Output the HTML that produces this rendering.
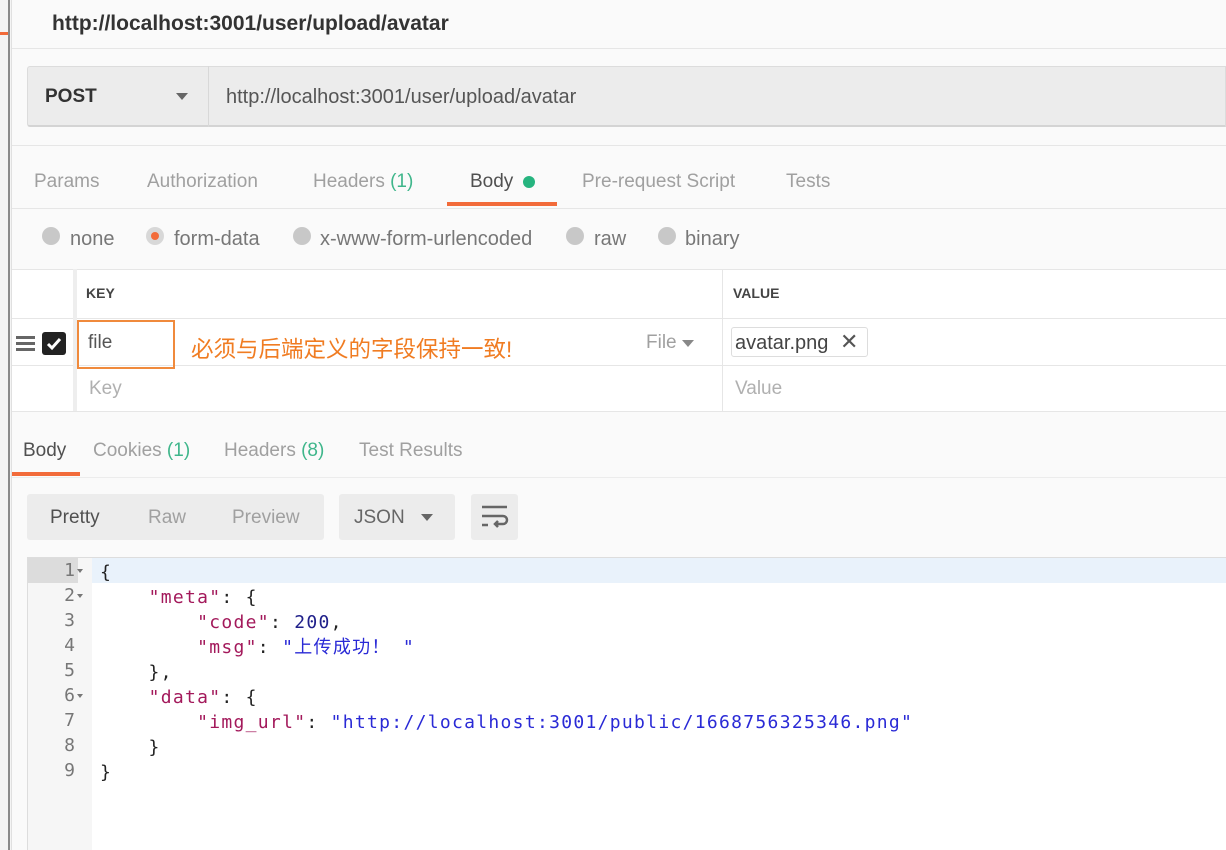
<!DOCTYPE html>
<html><head><meta charset="utf-8"><style>
*{margin:0;padding:0;box-sizing:border-box}
body{width:1226px;height:850px;overflow:hidden;background:#fafafa;font-family:"Liberation Sans","Noto Sans CJK SC",sans-serif;position:relative;color:#505050}
.a{position:absolute;white-space:nowrap}
.hl{position:absolute;height:1px;background:#e6e6e6}
.vl{position:absolute;width:1px;background:#e6e6e6}
.t{font-size:19px;color:#a0a0a0}
.g{color:#3fb68b}
.radio{position:absolute;width:18px;height:18px;border-radius:50%;background:#c8c8c8}
.code{font-family:"DejaVu Sans Mono","Liberation Mono","Noto Sans CJK SC",monospace;font-size:18px;letter-spacing:1.3px}
.ln{position:absolute;left:27px;width:48px;text-align:right;font-family:"DejaVu Sans Mono",monospace;font-size:18px;color:#777}
.k{color:#a3195b}.s{color:#2a2ad6}.n{color:#20208a}
</style></head><body>
<div class="a" style="left:0;top:0;width:11px;height:850px;background:#f4f4f4"></div>
<div class="a" style="left:8px;top:0;width:2px;height:850px;background:#8a8a8a"></div>
<div class="a" style="left:0;top:32px;width:8px;height:3px;background:#f26b3a"></div>
<div class="vl" style="left:11px;top:0;height:850px;background:#e0e0e0"></div>
<div class="a" style="left:12px;top:0;width:1214px;height:48px;background:#fafafa"></div>
<div class="a" style="left:52px;top:12px;font-size:21px;font-weight:bold;color:#333">http://localhost:3001/user/upload/avatar</div>
<div class="hl" style="left:12px;top:48px;width:1214px"></div>
<div class="a" style="left:27px;top:66px;width:1199px;height:61px;background:#ececec;border:1px solid #dcdcdc;border-radius:3px 0 0 3px;border-bottom:2px solid #d4d4d4"></div>
<div class="vl" style="left:208px;top:66px;height:61px;background:#d8d8d8"></div>
<div class="a" style="left:45px;top:86px;font-size:19px;font-weight:bold;color:#333">POST</div>
<div class="a" style="left:176px;top:93px;width:0;height:0;border-left:6px solid transparent;border-right:6px solid transparent;border-top:7px solid #666"></div>
<div class="a" style="left:226px;top:86px;font-size:20px;color:#555">http://localhost:3001/user/upload/avatar</div>
<div class="hl" style="left:12px;top:145px;width:1214px"></div>
<div class="a t" style="left:34px;top:171px">Params</div>
<div class="a t" style="left:147px;top:171px">Authorization</div>
<div class="a t" style="left:313px;top:171px">Headers <span class="g">(1)</span></div>
<div class="a t" style="left:470px;top:171px;color:#505050">Body</div>
<div class="a" style="left:523px;top:176px;width:12px;height:12px;border-radius:50%;background:#26b47f"></div>
<div class="a t" style="left:582px;top:171px">Pre-request Script</div>
<div class="a t" style="left:786px;top:171px">Tests</div>
<div class="a" style="left:447px;top:202px;width:110px;height:4px;background:#f26b3a"></div>
<div class="hl" style="left:12px;top:208px;width:1214px"></div>
<div class="radio" style="left:42px;top:227px"></div><div class="a t" style="left:70px;top:228px;color:#777;font-size:20px">none</div>
<div class="radio" style="left:146px;top:227px;background:#d8d8d8"></div><div class="a" style="left:151px;top:232px;width:8px;height:8px;border-radius:50%;background:#f26b3a"></div><div class="a t" style="left:174px;top:228px;color:#777;font-size:20px">form-data</div>
<div class="radio" style="left:293px;top:227px"></div><div class="a t" style="left:320px;top:228px;color:#777;font-size:20px">x-www-form-urlencoded</div>
<div class="radio" style="left:566px;top:227px"></div><div class="a t" style="left:594px;top:228px;color:#777;font-size:20px">raw</div>
<div class="radio" style="left:658px;top:227px"></div><div class="a t" style="left:685px;top:228px;color:#777;font-size:20px">binary</div>
<div class="a" style="left:12px;top:269px;width:1214px;height:143px;background:#fff"></div>
<div class="hl" style="left:12px;top:269px;width:1214px"></div>
<div class="hl" style="left:12px;top:318px;width:1214px"></div>
<div class="hl" style="left:12px;top:365px;width:1214px"></div>
<div class="hl" style="left:12px;top:411px;width:1214px"></div>
<div class="a" style="left:73px;top:269px;width:4px;height:142px;background:#eee"></div>
<div class="vl" style="left:722px;top:269px;height:142px"></div>
<div class="a" style="left:86px;top:285px;font-size:14px;font-weight:bold;color:#444">KEY</div>
<div class="a" style="left:733px;top:285px;font-size:14px;font-weight:bold;color:#444">VALUE</div>
<div class="a" style="left:16px;top:336px;width:19px;height:3px;background:#666;box-shadow:0 6px 0 #666,0 12px 0 #666"></div>
<div class="a" style="left:42px;top:332px;width:24px;height:23px;border-radius:3px;background:#222"></div>
<svg class="a" style="left:42px;top:332px" width="24" height="23"><path d="M6 12l4 4 8-9" stroke="#fff" stroke-width="3" fill="none"/></svg>
<div class="a" style="left:77px;top:320px;width:98px;height:49px;border:2px solid #f08a3c"></div>
<div class="a" style="left:88px;top:332px;font-size:19px;color:#555">file</div>
<div class="a" style="left:191px;top:332px;font-size:22.5px;color:#f07c22">必须与后端定义的字段保持一致!</div>
<div class="a t" style="left:646px;top:332px">File</div>
<div class="a" style="left:682px;top:340px;width:0;height:0;border-left:6px solid transparent;border-right:6px solid transparent;border-top:7px solid #888"></div>
<div class="a" style="left:731px;top:327px;width:137px;height:30px;border:1px solid #ddd;border-radius:3px"></div>
<div class="a" style="left:735px;top:332px;font-size:20px;color:#444">avatar.png</div>
<div class="a" style="left:840px;top:329px;font-size:22px;color:#555">✕</div>
<div class="a t" style="left:89px;top:378px;color:#b0b0b0">Key</div>
<div class="a t" style="left:735px;top:378px;color:#b0b0b0">Value</div>
<div class="a t" style="left:23px;top:440px;color:#505050">Body</div>
<div class="a t" style="left:93px;top:440px">Cookies <span class="g">(1)</span></div>
<div class="a t" style="left:224px;top:440px">Headers <span class="g">(8)</span></div>
<div class="a t" style="left:359px;top:440px">Test Results</div>
<div class="a" style="left:12px;top:472px;width:68px;height:4px;background:#f26b3a"></div>
<div class="hl" style="left:12px;top:477px;width:1214px;background:#ececec"></div>
<div class="a" style="left:27px;top:494px;width:297px;height:46px;background:#ececec;border-radius:3px"></div>
<div class="a t" style="left:50px;top:507px;color:#505050">Pretty</div>
<div class="a t" style="left:148px;top:507px">Raw</div>
<div class="a t" style="left:232px;top:507px">Preview</div>
<div class="a" style="left:339px;top:494px;width:116px;height:46px;background:#ececec;border-radius:3px"></div>
<div class="a t" style="left:354px;top:507px;color:#666">JSON</div>
<div class="a" style="left:421px;top:514px;width:0;height:0;border-left:6px solid transparent;border-right:6px solid transparent;border-top:7px solid #666"></div>
<div class="a" style="left:471px;top:494px;width:47px;height:46px;background:#ececec;border-radius:3px"></div>
<svg class="a" style="left:471px;top:494px" width="47" height="46"><path d="M11 13h25M11 22h21a4 4 0 0 1 0 8h-8M27 27l-3 3 3 3M11 31h6" stroke="#666" stroke-width="2.5" fill="none"/></svg>
<div class="a" style="left:27px;top:557px;width:1199px;height:293px;background:#fff;border-top:1px solid #ddd;border-left:1px solid #ddd"></div>
<div class="a" style="left:28px;top:558px;width:64px;height:292px;background:#f6f6f6"></div>
<div class="a" style="left:28px;top:558px;width:50px;height:25px;background:#dcdcdc"></div>
<div class="a" style="left:92px;top:558px;width:1134px;height:25px;background:#e9f2fb"></div>
<div class="ln" style="top:560px">1</div><div class="ln" style="top:585px">2</div><div class="ln" style="top:610px">3</div><div class="ln" style="top:635px">4</div><div class="ln" style="top:660px">5</div><div class="ln" style="top:685px">6</div><div class="ln" style="top:710px">7</div><div class="ln" style="top:735px">8</div><div class="ln" style="top:760px">9</div>
<div class="a" style="left:77px;top:569px;border-left:3px solid transparent;border-right:3px solid transparent;border-top:4px solid #777"></div>
<div class="a" style="left:77px;top:594px;border-left:3px solid transparent;border-right:3px solid transparent;border-top:4px solid #777"></div>
<div class="a" style="left:77px;top:694px;border-left:3px solid transparent;border-right:3px solid transparent;border-top:4px solid #777"></div>
<div class="a code" style="left:100px;top:560px;line-height:25px;color:#222;white-space:pre">{
    <span class="k">"meta"</span>: {
        <span class="k">"code"</span>: <span class="n">200</span>,
        <span class="k">"msg"</span>: <span class="s">"上传成功！ "</span>
    },
    <span class="k">"data"</span>: {
        <span class="k">"img_url"</span>: <span class="s">"http://localhost:3001/public/1668756325346.png"</span>
    }
}</div>
</body></html>
